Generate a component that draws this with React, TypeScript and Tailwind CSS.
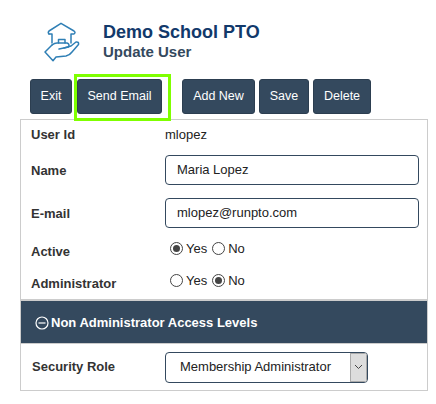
const BTN = 'h-[35px] rounded-[3px] bg-[#34495e] text-[12.5px] text-white border border-[#2c3e50] flex items-center justify-center'

function HouseHand() {
  return (
    <svg width="36" height="40" viewBox="0 0 36 40" fill="none" stroke="#2f7fb5" strokeWidth="1.5" strokeLinejoin="round" strokeLinecap="round">
      <path d="M5 12 Q3.5 10.5 5 9 L17 1.3 L30 9 Q32 10.5 30 12 L27 12 L27 21" />
      <path d="M5 12 L8 12 L8 21" />
      <path d="M14.5 21 V17.5 H21 V21" />
      <path d="M8 23 Q11 20.5 14 21 L23 21 Q26 22 24.5 25 L15 27" />
      <path d="M20 26 L27 24 L32 20 Q35 19.5 34.5 22.5 L28 30 Q26 33 22 34 L12 35 L9 38.7 L1 30 L8 23" />
    </svg>
  )
}

function Radio({ on }: { on?: boolean }) {
  return (
    <span className="w-[13px] h-[13px] rounded-full border border-[#444] bg-white flex items-center justify-center shrink-0">
      {on && <span className="w-[7px] h-[7px] rounded-full bg-[#444]" />}
    </span>
  )
}

function YesNo({ yes }: { yes: boolean }) {
  return (
    <div className="flex items-center text-[13px] text-[#222]">
      <Radio on={yes} />
      <span className="ml-[3px] mr-[5px]">Yes</span>
      <Radio on={!yes} />
      <span className="ml-[3px]">No</span>
    </div>
  )
}

const LABEL = 'w-[134px] pl-[10px] pt-[2px] text-[13px] font-bold text-[#333]'
const INPUT = 'w-[254px] h-[30px] rounded-[4px] border border-[#34495e] bg-white pl-[11px] flex items-center text-[13px] text-[#222]'

export default function App() {
  return (
    <div className="w-[436px] h-[404px] bg-white font-['Liberation_Sans',Arial,sans-serif] overflow-hidden">
      <div className="h-[79px] flex pl-[44px] pt-[22px]">
        <HouseHand />
        <div className="ml-[23px]">
          <div className="text-[18px] leading-[20px] font-bold text-[#12396b]">Demo School PTO</div>
          <div className="text-[15px] leading-[20px] font-bold text-[#34495e]">Update User</div>
        </div>
      </div>

      <div className="h-[40px] flex pl-[30px]">
        <div className={`${BTN} w-[42px]`}>Exit</div>
        <div className="relative ml-[5px] w-[85px]">
          <div className={`${BTN} w-[85px]`}>Send Email</div>
          <div className="absolute left-[-3px] top-[-5px] w-[97px] h-[47px] border-[3px] border-[#7fff00] pointer-events-none" />
        </div>
        <div className={`${BTN} ml-[20px] w-[73px]`}>Add New</div>
        <div className={`${BTN} ml-[4px] w-[50px]`}>Save</div>
        <div className={`${BTN} ml-[4px] w-[58px]`}>Delete</div>
      </div>

      <div className="ml-[20px] w-[408px] h-[272px] border border-[#ccc] flex flex-col">
        <div className="h-[29px] flex items-center">
          <div className="w-[134px] pl-[10px] text-[13px] font-bold text-[#333]">User Id</div>
          <div className="ml-[10px] text-[13px] text-[#222]">mlopez</div>
        </div>
        <div className="mt-[6px] flex items-center">
          <div className={LABEL}>Name</div>
          <div className={`${INPUT} ml-[10px]`}>Maria Lopez</div>
        </div>
        <div className="mt-[13px] flex items-center">
          <div className={LABEL}>E-mail</div>
          <div className={`${INPUT} ml-[10px]`}>mlopez@runpto.com</div>
        </div>
        <div className="mt-[13px] h-[20px] flex items-center">
          <div className={LABEL}>Active</div>
          <div className="ml-[15px] mt-[-5px]"><YesNo yes /></div>
        </div>
        <div className="mt-[12px] h-[20px] flex items-center">
          <div className={LABEL}>Administrator</div>
          <div className="ml-[15px] mt-[-5px]"><YesNo yes={false} /></div>
        </div>
        <div className="mt-[6px] h-[45px] bg-[#34495e] border-t-2 border-[#ccc] border-b border-b-[#ccc] flex items-center pl-[14px] pt-[2px] text-white text-[13px] font-bold">
          <svg width="14" height="14" viewBox="0 0 14 14" fill="none" stroke="#fff" strokeWidth="1.2" className="mr-[2px]">
            <circle cx="7" cy="7" r="6" />
            <path d="M3.5 7 H10.5" />
          </svg>
          Non Administrator Access Levels
        </div>
        <div className="flex-1 flex items-center">
          <div className="w-[134px] pl-[11px] text-[13px] font-bold text-[#333]">Security Role</div>
          <div className="ml-[10px] w-[203px] h-[31px] rounded-[4px] border border-[#34495e] bg-white flex overflow-hidden">
            <div className="flex-1 pl-[14px] flex items-center text-[13px] text-[#222]">Membership Administrator</div>
            <div className="w-[17px] bg-[#ddd] border border-[#aaa] flex items-center justify-center">
              <svg width="9" height="6" viewBox="0 0 9 6" fill="none" stroke="#444" strokeWidth="1"><path d="M1 1 L4.5 4.5 L8 1" /></svg>
            </div>
          </div>
        </div>
      </div>
    </div>
  )
}
